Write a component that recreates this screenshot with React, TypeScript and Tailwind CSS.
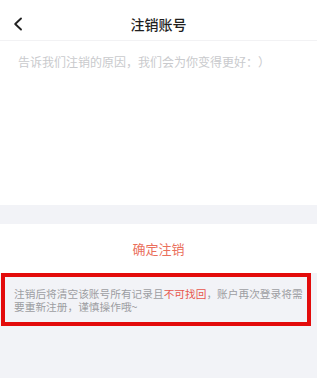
import React from "react";

export default function App() {
  return (
    <div className="w-[324px] h-[378px] bg-white overflow-hidden [text-spacing-trim:space-all]" style={{ fontFamily: '"Noto Sans CJK SC", "Noto Sans", sans-serif' }}>
      <div className="w-[317px] h-[378px] flex flex-col bg-[#f2f3f7]">
        <div className="h-[41px] bg-white border-b border-[#f2f2f4] pt-[8px] flex">
          <div className="relative w-full h-[32px] flex items-center justify-center">
            <svg className="absolute left-[13px] top-[9px]" width="10" height="14" viewBox="0 0 10 14" fill="none">
              <polyline points="8,1.5 2.2,7 8,12.5" stroke="#222" strokeWidth="1.9" strokeLinecap="round" strokeLinejoin="round" />
            </svg>
            <span className="text-[14px] leading-[20px] font-medium text-[#1f1f1f]">注销账号</span>
          </div>
        </div>
        <div className="h-[164px] bg-white pl-[18px] pt-[12px]">
          <p className="text-[12px] leading-[17px] text-[#c9cacd]">告诉我们注销的原因，我们会为你变得更好：）</p>
        </div>
        <div className="h-[19px]" />
        <div className="h-[49px] bg-white flex justify-center pt-[16px]">
          <span className="text-[13px] leading-[18px] text-[#ea6f5c]">确定注销</span>
        </div>
        <div className="flex-1 pl-[1px]">
          <div className="w-[310px] border-[4px] border-[#e30b0b] pl-[9px] pr-[4px] pt-[10px] pb-[9px]">
            <p className="text-[10.7px] leading-[13px] text-[#9d9ea2]">
              注销后将清空该账号所有记录且<span className="text-[#e8564c]">不可找回</span>，账户再次登录将需要重新注册，谨慎操作哦~
            </p>
          </div>
        </div>
      </div>
    </div>
  );
}
